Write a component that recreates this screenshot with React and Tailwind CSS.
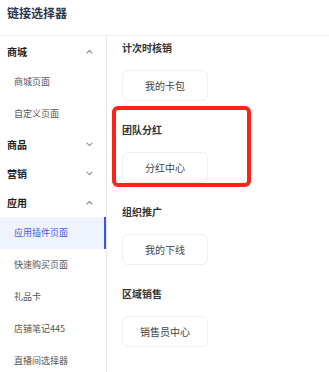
import React from 'react';

const menu = [
  { name: '商城', open: true, children: ['商城页面', '自定义页面'] },
  { name: '商品', open: false, children: [] },
  { name: '营销', open: false, children: [] },
  { name: '应用', open: true, children: ['应用插件页面', '快速购买页面', '礼品卡', '店铺笔记445', '直播间选择器'] },
];

const sections = [
  { title: '计次时核销', links: ['我的卡包'] },
  { title: '团队分红', links: ['分红中心'] },
  { title: '组织推广', links: ['我的下线'] },
  { title: '区域销售', links: ['销售员中心'] },
];

const Chevron = ({ up }) => (
  <svg width="7" height="5" viewBox="0 0 7 5" fill="none" className="text-[#8a8f99]">
    <path
      d={up ? 'M1 4L3.5 1.5L6 4' : 'M1 1.2L3.5 3.7L6 1.2'}
      stroke="currentColor"
      strokeWidth="1.1"
      strokeLinecap="round"
      strokeLinejoin="round"
    />
  </svg>
);

const App = () => {
  const active = '应用插件页面';

  return (
    <div
      className="relative w-[329px] h-[372px] overflow-hidden bg-white"
      style={{ fontFamily: '"Noto Sans CJK SC", "Noto Sans", sans-serif' }}
    >
      {/* Header */}
      <div className="h-[36px] border-b border-[#f0f1f4] px-[7px] pt-[5px]">
        <h1 className="text-[12px] leading-[16px] font-bold text-[#2f3549]">链接选择器</h1>
      </div>

      <div className="flex h-[336px]">
        {/* Sidebar */}
        <div className="w-[107px] shrink-0 border-r border-[#e4e7f0] pt-[1px]">
          {menu.map((group) => (
            <div key={group.name}>
              <div className="h-[29px] flex items-center justify-between pl-[7px] pr-[13px]">
                <span className="text-[10px] font-bold text-[#222]">{group.name}</span>
                <Chevron up={group.open} />
              </div>
              {group.children.map((child) =>
                child === active ? (
                  <div
                    key={child}
                    className="h-[32px] flex items-center pl-[14px] bg-[#eff3fe] border-r-2 border-[#3b55f5] text-[9px] text-[#4357f0]"
                  >
                    {child}
                  </div>
                ) : (
                  <div key={child} className="h-[32px] flex items-center pl-[14px] text-[9px] text-[#555]">
                    {child}
                  </div>
                )
              )}
            </div>
          ))}
        </div>

        {/* Content */}
        <div className="flex-1 pl-[15px] pt-[5px]">
          {sections.map((s) => (
            <div key={s.title} className="mb-[22px]">
              <div className="h-[14px] leading-[14px] text-[10px] font-bold text-[#333]">{s.title}</div>
              <div className="mt-[15px] flex gap-2">
                {s.links.map((l) => (
                  <div
                    key={l}
                    className="w-[86px] h-[31px] flex items-center justify-center rounded-[6px] border border-[#efefef] text-[10px] text-[#444]"
                  >
                    {l}
                  </div>
                ))}
              </div>
            </div>
          ))}
        </div>
      </div>

      {/* annotation box */}
      <div className="absolute left-[112px] top-[106px] w-[139px] h-[81px] border-4 border-[#ff2219] rounded-[6px]" />
    </div>
  );
};

export default App;
